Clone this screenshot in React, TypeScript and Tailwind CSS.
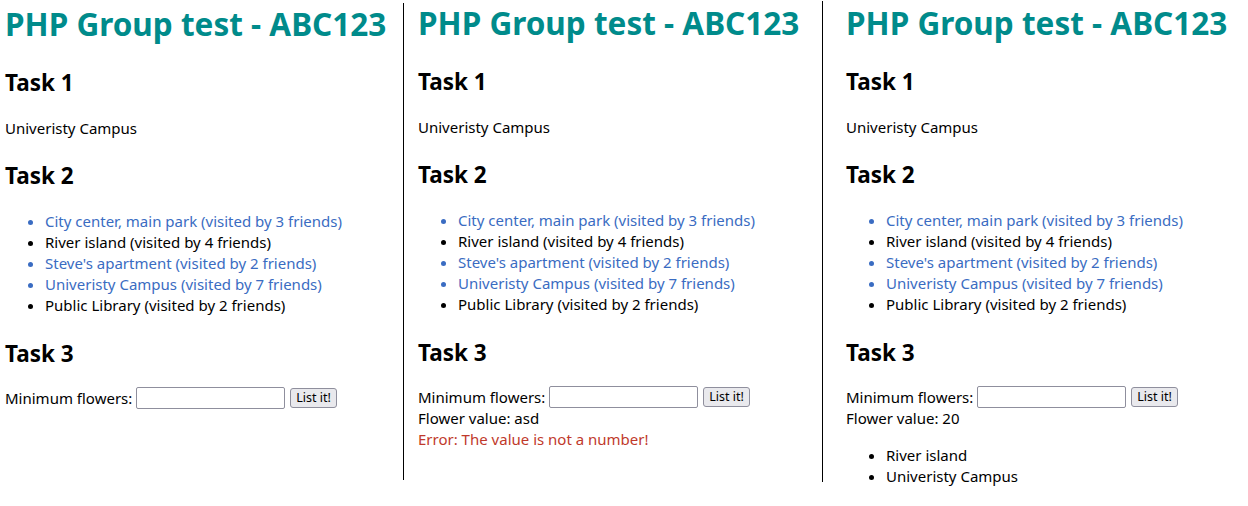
import React from 'react';

interface Place {
  name: string;
  friends: number;
  link: boolean;
}

const places: Place[] = [
  { name: 'City center, main park', friends: 3, link: true },
  { name: 'River island', friends: 4, link: false },
  { name: "Steve's apartment", friends: 2, link: true },
  { name: 'Univeristy Campus', friends: 7, link: true },
  { name: 'Public Library', friends: 2, link: false },
];

const Form = () => (
  <div className="mt-[17px] flex h-[22px] items-center">
    <span>Minimum flowers:</span>
    <input
      type="text"
      className="ml-[4px] h-[22px] w-[149px] rounded-[2px] border border-[#8f8f9d] bg-white px-1 text-[13px] outline-none"
    />
    <button className="ml-[5px] h-[20px] rounded-[3px] border border-[#8f8f9d] bg-[#e9e9ed] px-[5px] text-[12.5px] leading-[18px] text-black">
      List it!
    </button>
  </div>
);

const Panel = ({ variant }: { variant: 'empty' | 'error' | 'result' }) => (
  <div className="text-[15px] leading-[21px] text-black">
    <h1 className="text-[31.5px] font-bold leading-[43px] text-[#008b8b]">PHP Group test - ABC123</h1>

    <h2 className="mt-[22px] text-[22.5px] font-bold leading-[32px]">Task 1</h2>
    <p className="mt-[19px]">Univeristy Campus</p>

    <h2 className="mt-[21px] text-[22.5px] font-bold leading-[32px]">Task 2</h2>
    <ul className="mt-[19px] list-disc pl-[40px]">
      {places.map((p) => (
        <li key={p.name} className={p.link ? 'text-[#3a6cc2]' : 'text-black'}>
          {p.name} (visited by {p.friends} friends)
        </li>
      ))}
    </ul>

    <h2 className="mt-[22px] text-[22.5px] font-bold leading-[32px]">Task 3</h2>
    <Form />

    {variant === 'error' && (
      <>
        <p>Flower value: asd</p>
        <p className="text-[#c0392b]">Error: The value is not a number!</p>
      </>
    )}
    {variant === 'result' && (
      <>
        <p>Flower value: 20</p>
        <ul className="mt-[16px] list-disc pl-[40px]">
          <li>River island</li>
          <li>Univeristy Campus</li>
        </ul>
      </>
    )}
  </div>
);

export default function App() {
  return (
    <div
      className="flex h-[506px] w-[1248px] items-start bg-white"
      style={{ fontFamily: '"Noto Sans", "Open Sans", sans-serif' }}
    >
      <div className="mt-[3px] h-[477px] w-[404px] border-r border-black pl-[5px]">
        <div className="-mt-[1px]">
          <Panel variant="empty" />
        </div>
      </div>
      <div className="mt-[1px] h-[481px] w-[419px] border-r border-black pl-[14px]">
        <Panel variant="error" />
      </div>
      <div className="pl-[23px] pt-[1px]">
        <Panel variant="result" />
      </div>
    </div>
  );
}
